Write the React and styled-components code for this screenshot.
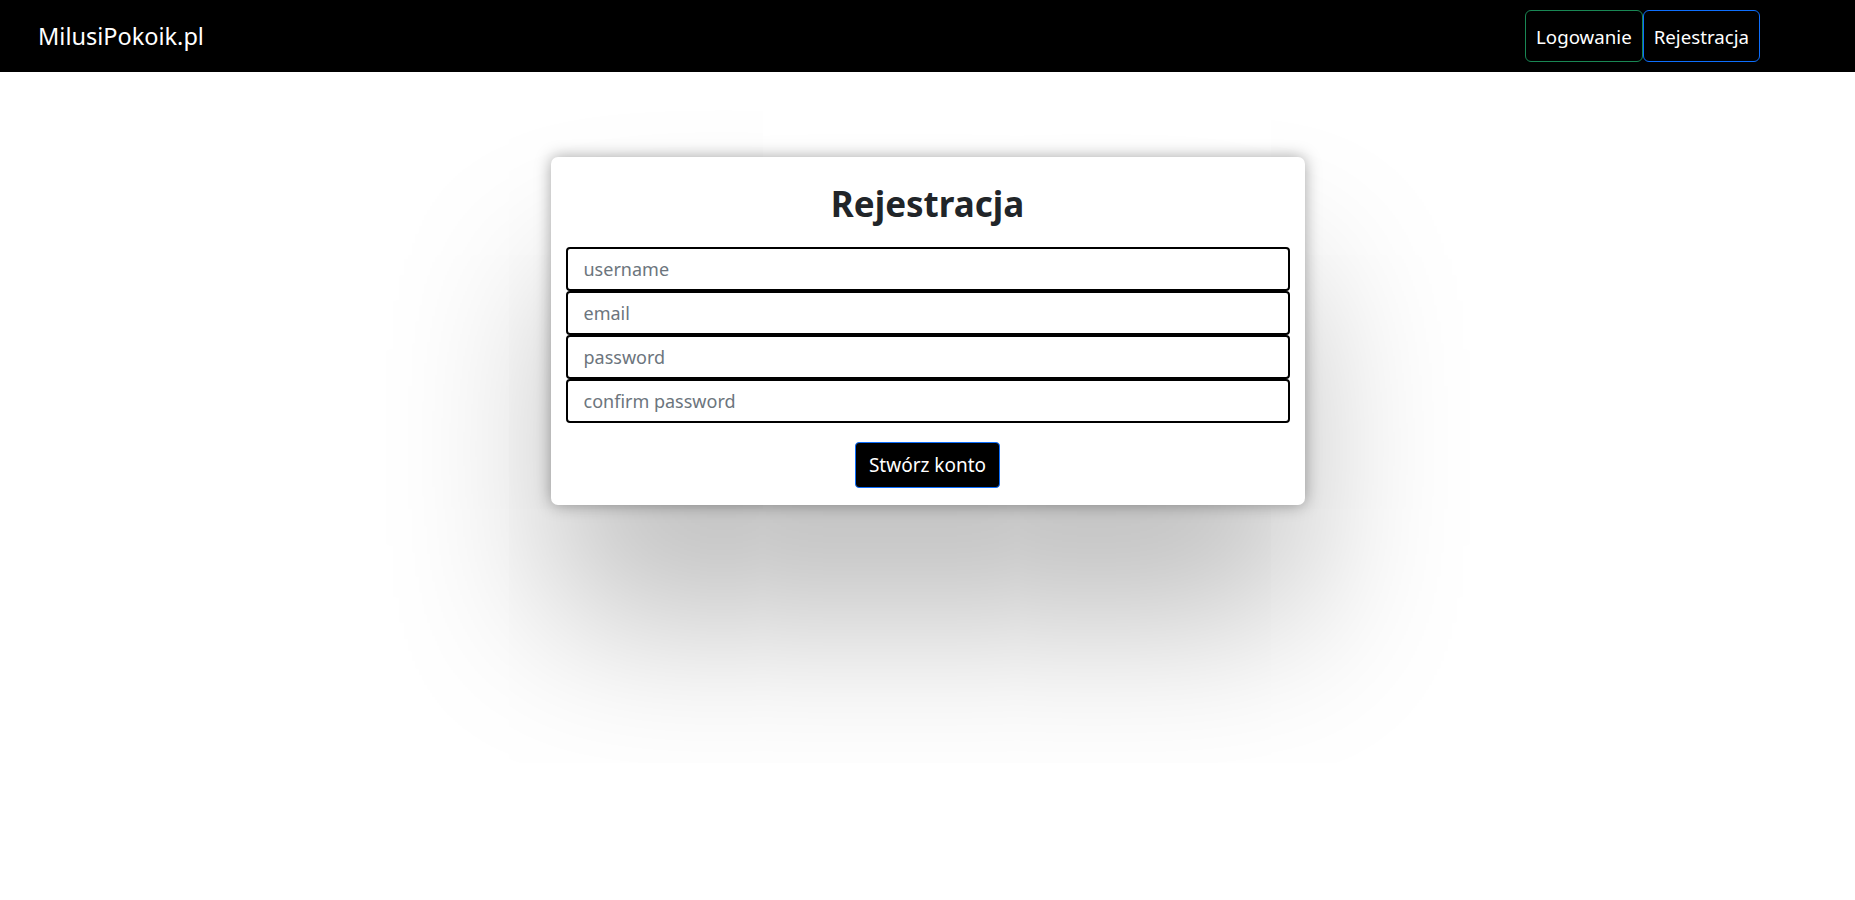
import React from "react";
import styled, { createGlobalStyle } from "styled-components";

const GlobalStyle = createGlobalStyle`
  html, body {
    margin: 0;
    padding: 0;
    background: #fff;
    font-family: "Noto Sans", "Open Sans", sans-serif;
    color: #212529;
  }
  * {
    box-sizing: border-box;
  }
`;

const Navbar = styled.nav`
  height: 72px;
  background: #000;
  display: flex;
  align-items: center;
  justify-content: space-between;
  padding: 0 95px 0 38px;
`;

const Brand = styled.a`
  color: #fff;
  font-size: 23.5px;
  text-decoration: none;
`;

const NavButtons = styled.div`
  display: flex;
`;

const NavButton = styled.button`
  height: 52px;
  padding: 0 10px;
  background: #000;
  color: #fff;
  font-family: inherit;
  font-size: 18.7px;
  border: 1px solid ${(p) => p.color};
  border-radius: 6px;
  cursor: pointer;
`;

const Page = styled.main`
  display: flex;
  justify-content: center;
  padding-top: 85px;
  min-height: 828px;
`;

const Card = styled.form`
  width: 754px;
  height: 348px;
  background: #fff;
  border-radius: 7px;
  padding: 26px 15px 16px;
  display: flex;
  flex-direction: column;
  align-items: center;
  box-shadow: 0 0 16px rgba(0, 0, 0, 0.35), 0 118px 157px rgba(0, 0, 0, 0.25);
`;

const Title = styled.h1`
  margin: 0 0 22px;
  font-size: 35px;
  font-weight: 700;
  line-height: 1.2;
  color: #212529;
`;

const Fields = styled.div`
  display: flex;
  flex-direction: column;
  width: 100%;
`;

const Input = styled.input`
  height: 44px;
  width: 100%;
  border: 2px solid #000;
  border-radius: 4px;
  padding: 0 16px;
  font-family: inherit;
  font-size: 18px;
  color: #212529;
  outline: none;

  &::placeholder {
    color: #6c757d;
  }
`;

const SubmitButton = styled.button`
  margin-top: 19px;
  height: 46px;
  padding: 0 13px;
  background: #000;
  color: #fff;
  border: 1px solid #0d6efd;
  border-radius: 4px;
  font-family: inherit;
  font-size: 19px;
  cursor: pointer;
`;

const App = () => {
  return (
    <>
      <GlobalStyle />
      <Navbar>
        <Brand href="#">MilusiPokoik.pl</Brand>
        <NavButtons>
          <NavButton color="#198754">Logowanie</NavButton>
          <NavButton color="#0d6efd">Rejestracja</NavButton>
        </NavButtons>
      </Navbar>
      <Page>
        <Card onSubmit={(e) => e.preventDefault()}>
          <Title>Rejestracja</Title>
          <Fields>
            <Input type="text" placeholder="username" />
            <Input type="email" placeholder="email" />
            <Input type="password" placeholder="password" />
            <Input type="password" placeholder="confirm password" />
          </Fields>
          <SubmitButton type="submit">Stwórz konto</SubmitButton>
        </Card>
      </Page>
    </>
  );
};

export default App;
